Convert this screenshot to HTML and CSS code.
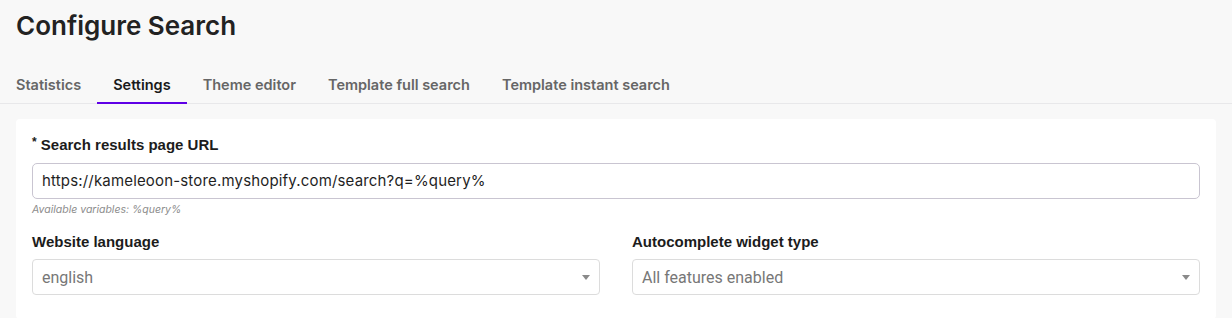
FILE: index.html
```html
<!DOCTYPE html>
<html lang="en">
<head>
    <meta charset="UTF-8">
    <meta name="viewport" content="width=device-width, initial-scale=1.0">
    <title>Configure Search</title>
    <link rel="stylesheet" href="styles.css">
</head>
<body>
    <div class="page">
        <h1 class="title">Configure Search</h1>

        <!-- tabs -->
        <div class="tabs">
            <div class="tab">Statistics</div>
            <div class="tab active">Settings</div>
            <div class="tab">Theme editor</div>
            <div class="tab">Template full search</div>
            <div class="tab">Template instant search</div>
        </div>

        <!-- settings card -->
        <div class="card">
            <div class="field">
                <label class="label"><span class="req">*</span> Search results page URL</label>
                <div class="input">https://kameleoon-store.myshopify.com/search?q=%query%</div>
                <div class="help">Available variables: %query%</div>
            </div>

            <div class="row">
                <div class="field">
                    <label class="label">Website language</label>
                    <div class="select">
                        <span>english</span>
                        <span class="caret"></span>
                    </div>
                </div>
                <div class="field">
                    <label class="label">Autocomplete widget type</label>
                    <div class="select">
                        <span>All features enabled</span>
                        <span class="caret"></span>
                    </div>
                </div>
            </div>
        </div>
    </div>
</body>
</html>
```

FILE: styles.css
```css
body {
    margin: 0;
    background-color: #f8f8f8;
    font-family: 'Inter', sans-serif;
    color: #222;
}

.page {
    padding: 10px 16px;
}

.title {
    margin: 0 0 23px;
    font-size: 26px;
    line-height: 32px;
    font-weight: 600;
    color: #222;
}

/* tabs */
.tabs {
    display: flex;
    margin: 0 -16px;
    border-bottom: 1px solid #e8e8ea;
}

.tab {
    padding: 10px 16px 7px;
    font-size: 14.5px;
    line-height: 20px;
    font-weight: 600;
    color: #666;
    border-bottom: 2px solid transparent;
    margin-bottom: -1px;
}

.tab.active {
    color: #1a1a1a;
    border-bottom-color: #5f00e6;
}

/* card */
.card {
    margin-top: 15px;
    background-color: #fff;
    border-radius: 4px;
    padding: 16px 16px 24px;
}

.label {
    display: block;
    font-family: 'Liberation Sans', Arial, sans-serif;
    font-size: 15px;
    line-height: 20px;
    font-weight: bold;
    color: #1c1c1c;
    margin-bottom: 7px;
}

.req {
    font-size: 12px;
    position: relative;
    top: -4px;
}

.input {
    height: 34px;
    border: 1px solid #c9c5d1;
    border-radius: 5px;
    padding: 0 9px;
    font-size: 15px;
    letter-spacing: 0.17px;
    line-height: 34px;
    color: #1f1f1f;
}

.help {
    margin-top: 4px;
    font-size: 10.5px;
    line-height: 14px;
    font-style: italic;
    color: #8c8c8c;
}

.row {
    display: grid;
    grid-template-columns: 1fr 1fr;
    gap: 32px;
    margin-top: 15px;
}

.select {
    display: flex;
    align-items: center;
    justify-content: space-between;
    height: 34px;
    border: 1px solid #dcdcdc;
    border-radius: 4px;
    padding: 0 9px;
    font-family: 'Roboto', sans-serif;
    font-size: 16px;
    color: #777;
}

.caret {
    width: 0;
    height: 0;
    border-left: 4px solid transparent;
    border-right: 4px solid transparent;
    border-top: 5px solid #8a8a8a;
}
```
